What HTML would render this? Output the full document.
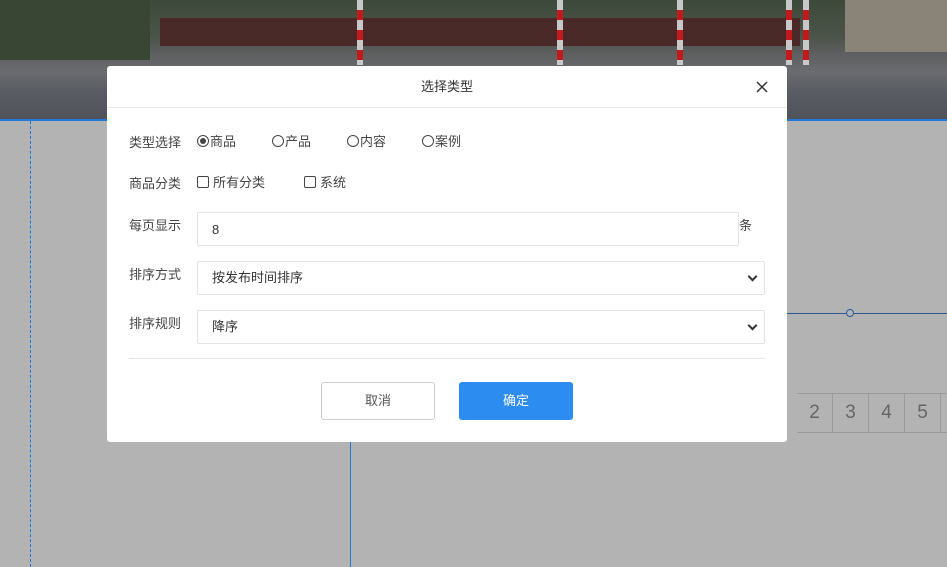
<!DOCTYPE html>
<html><head><meta charset="utf-8"><style>
*{box-sizing:border-box}
body{margin:0;width:947px;height:567px;overflow:hidden;background:#b3b3b3;font-family:"Liberation Sans","Noto Sans CJK SC",sans-serif;position:relative}
.photo{position:absolute;left:0;top:0;width:947px;height:120px;background:linear-gradient(180deg,#3d4a3a 0%,#4b5348 30%,#5d5f60 45%,#6a6c70 60%,#5a5d63 75%,#50545a 100%)}
.hedge{position:absolute;left:0;top:0;width:150px;height:60px;background:#3a4634}
.wall{position:absolute;left:160px;top:18px;width:640px;height:28px;background:#4a2a28}
.pole{position:absolute;top:0;width:6px;height:65px;background:repeating-linear-gradient(180deg,#c8c8c8 0 10px,#c21a1a 10px 20px)}
.gate{position:absolute;left:845px;top:0;width:102px;height:52px;background:#8a8478}
.blue{position:absolute;left:0;top:119px;width:947px;height:2px;background:#1e7ad4}
.vd{position:absolute;left:30px;top:121px;height:446px;border-left:1px dashed #1e7ad4}
.vl{position:absolute;left:350px;top:441px;width:1px;height:126px;background:#1e7ad4}
.hl{position:absolute;left:787px;top:313px;width:160px;height:1px;background:#2a5a90}
.dot{position:absolute;left:846px;top:309px;width:8px;height:8px;border:1px solid #2a5aa0;border-radius:50%;background:#b3b3b3}
.pg{position:absolute;top:393px;left:797px;display:flex;border-top:1px solid #999;border-bottom:1px solid #999;height:40px}
.pg div{width:36px;border-right:1px solid #999;font-size:19px;color:#666;text-align:center;line-height:38px}
.dlg{position:absolute;left:107px;top:66px;width:680px;height:376px;background:#fff;border-radius:3px}
.hd{height:42px;border-bottom:1px solid #e8e8e8;text-align:center;line-height:42px;font-size:13px;color:#333}
.x{position:absolute;right:19px;top:15px;width:12px;height:12px}
.lab{position:absolute;left:22px;font-size:13px;color:#444}
.t{position:absolute;font-size:13px;color:#444;line-height:16px}
.r{display:inline-block;width:12px;height:12px;border:1px solid #444;border-radius:50%;vertical-align:-1px;margin-right:1px;position:relative}
.r.on:after{content:"";position:absolute;left:2px;top:2px;width:6px;height:6px;border-radius:50%;background:#444}
.c{display:inline-block;width:12px;height:12px;border:1px solid #444;border-radius:2px;vertical-align:-1px;margin-right:4px}
.in{position:absolute;left:90px;width:542px;height:34px;border:1px solid #e3e3e3;border-radius:2px;font-size:13px;color:#333;padding-left:14px;line-height:32px}
.sel{width:568px}
.sel:after{content:"";position:absolute;right:8px;top:11px;width:5px;height:5px;border-right:2px solid #333;border-bottom:2px solid #333;transform:rotate(45deg)}
.sep{position:absolute;left:22px;top:292px;width:636px;height:1px;background:#e6e6e6}
.btn{position:absolute;top:316px;width:114px;height:38px;border-radius:3px;font-size:13px;text-align:center;line-height:36px}
</style></head><body>
<div class="photo"><div class="hedge"></div><div class="wall"></div>
<div class="pole" style="left:357px"></div><div class="pole" style="left:557px"></div><div class="pole" style="left:677px"></div><div class="pole" style="left:786px"></div><div class="pole" style="left:803px"></div><div class="gate"></div></div>
<div class="blue"></div><div class="vd"></div><div class="vl"></div><div class="hl"></div><div class="dot"></div>
<div class="pg"><div>2</div><div>3</div><div>4</div><div>5</div><div></div></div>
<div class="dlg">
<div class="hd">选择类型</div>
<svg class="x" viewBox="0 0 12 12"><path d="M1 1L11 11M11 1L1 11" stroke="#333" stroke-width="1.5"/></svg>
<div class="t lab" style="top:69px">类型选择</div>
<div class="t" style="left:90px;top:68px"><span class="r on"></span>商品</div>
<div class="t" style="left:165px;top:68px"><span class="r"></span>产品</div>
<div class="t" style="left:240px;top:68px"><span class="r"></span>内容</div>
<div class="t" style="left:315px;top:68px"><span class="r"></span>案例</div>
<div class="t lab" style="top:110px">商品分类</div>
<div class="t" style="left:90px;top:109px"><span class="c"></span>所有分类</div>
<div class="t" style="left:197px;top:109px"><span class="c"></span>系统</div>
<div class="t lab" style="top:152px">每页显示</div>
<div class="in" style="top:146px;padding-top:1px">8</div>
<div class="t" style="left:632px;top:152px">条</div>
<div class="t lab" style="top:201px">排序方式</div>
<div class="in sel" style="top:195px">按发布时间排序</div>
<div class="t lab" style="top:250px">排序规则</div>
<div class="in sel" style="top:244px">降序</div>
<div class="sep"></div>
<div class="btn" style="left:214px;border:1px solid #ccc;color:#555">取消</div>
<div class="btn" style="left:352px;background:#2d8cf0;color:#fff;line-height:38px">确定</div>
</div>
</body></html>
